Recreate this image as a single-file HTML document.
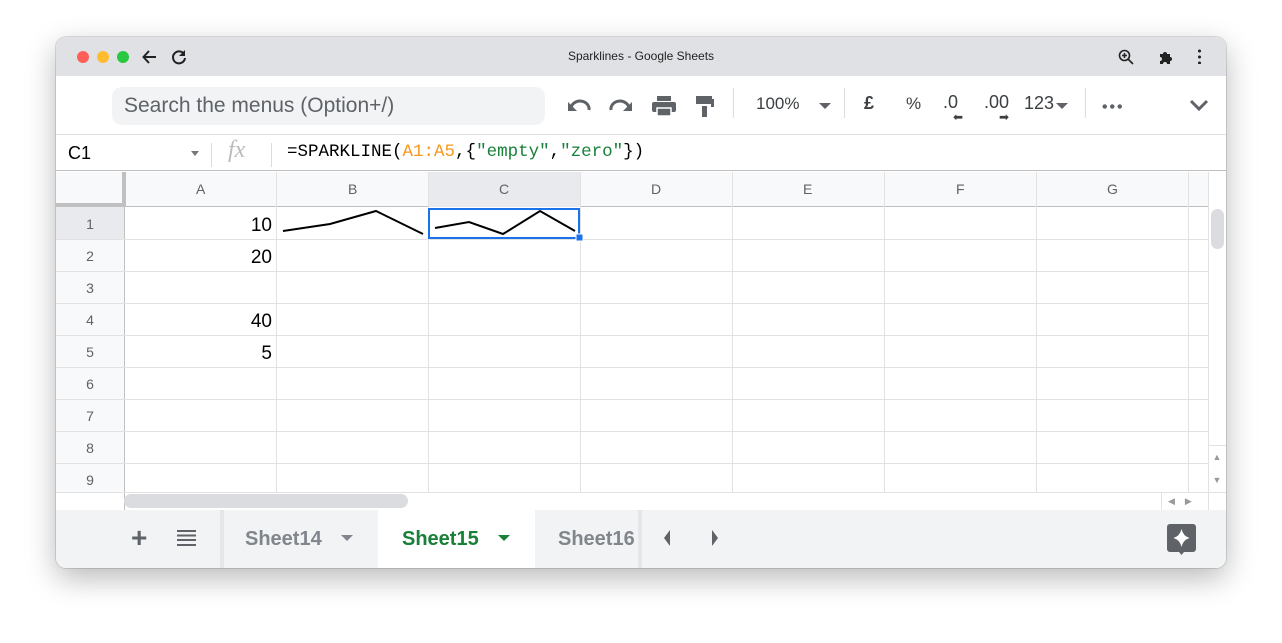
<!DOCTYPE html>
<html><head><style>
*{margin:0;padding:0;box-sizing:border-box}
body{width:1282px;height:643px;background:#fff;font-family:"Liberation Sans",Arial,sans-serif;position:relative;overflow:hidden}
.win{position:absolute;left:56px;top:37px;width:1170px;height:531px;border-radius:10px;overflow:hidden;background:#fff;box-shadow:0 10px 30px rgba(0,0,0,.28),0 0 0 1px rgba(0,0,0,.12)}
.abs{position:absolute}
.title{left:0;top:0;width:1170px;height:39px;background:#dfe1e5}
.dot{width:12px;height:12px;border-radius:50%;top:14px}
.tb{left:0;top:39px;width:1170px;height:59px;background:#fff;border-bottom:1px solid #e0e0e0}
.search{left:56px;top:11px;width:433px;height:38px;border-radius:10px;background:#f1f3f4;color:#5f6368;font-size:21px;line-height:38px;padding-left:12px}
.fb{left:0;top:98px;width:1170px;height:36px;border-bottom:1px solid #c0c0c0}
.mono{font-family:"Liberation Mono",monospace}
.hdr{background:#f8f9fa;color:#5f6368;font-size:14px;text-align:center}
.vl{position:absolute;width:1px;background:#e2e2e2}
.hl{position:absolute;height:1px;background:#e2e2e2}
.num{position:absolute;font-size:19px;color:#000;text-align:right;width:140px}
.tabs{left:0;top:473px;width:1170px;height:58px;background:#f1f3f4}
.tab{position:absolute;top:18px;font-size:20px;font-weight:bold;color:#80868b}
</style></head><body>
<div class="win">
 <div class="abs title">
  <div class="abs dot" style="left:21px;background:#fe5f57"></div>
  <div class="abs dot" style="left:41px;background:#febc2e"></div>
  <div class="abs dot" style="left:61px;background:#28c840"></div>
  <svg class="abs" style="left:85px;top:11px" width="18" height="18" viewBox="0 0 18 18"><path d="M15 9H3M8 3L2.5 9 8 15" stroke="#222" stroke-width="2" fill="none"/></svg>
  <svg class="abs" style="left:114px;top:11px" width="18" height="18" viewBox="0 0 18 18"><path d="M14 6A6 6 0 1 0 15 10" stroke="#222" stroke-width="2" fill="none"/><path d="M15 2v6h-6z" fill="#222"/></svg>
  <div class="abs" style="left:0;width:1170px;top:12px;text-align:center;font-size:12px;color:#222">Sparklines - Google Sheets</div>
  <svg class="abs" style="left:1062px;top:12px" width="16" height="16" viewBox="0 0 16 16"><circle cx="6.5" cy="6.5" r="5" stroke="#222" stroke-width="1.6" fill="none"/><path d="M10 10l5 5M6.5 4v5M4 6.5h5" stroke="#222" stroke-width="1.6"/></svg>
  <svg class="abs" style="left:1102px;top:12px" width="16" height="16" viewBox="0 0 16 16"><path d="M2 5h3a2 2 0 1 1 4 0h3v3a2 2 0 1 1 0 4v3H9a2 2 0 1 0-4 0H2v-3a2 2 0 1 0 0-4z" fill="#222"/></svg>
  <div class="abs" style="left:1142px;top:11px;width:3px;height:16px;background:radial-gradient(circle,#222 1.4px,transparent 1.6px) 0 0/3px 6px"></div>
 </div>
 <div class="abs tb">
  <div class="abs search">Search the menus (Option+/)</div>
  <svg class="abs" style="left:510px;top:18px" width="150" height="24" viewBox="0 0 150 24">
   <path d="M5 14a8 7 0 0 1 18 2" stroke="#5f6368" stroke-width="3" fill="none"/><path d="M2 8v9h9z" fill="#5f6368"/>
   <path d="M63 14a8 7 0 0 0-18 2" stroke="#5f6368" stroke-width="3" fill="none"/><path d="M66 8v9h-9z" fill="#5f6368"/>
   <rect x="86" y="8" width="24" height="10" rx="2" fill="#5f6368"/><rect x="91" y="2" width="14" height="5" fill="#5f6368"/><rect x="91" y="14" width="14" height="8" fill="#5f6368" stroke="#fff" stroke-width="1.5"/>
   <rect x="130" y="2" width="16" height="8" fill="#5f6368"/><rect x="145" y="5" width="3" height="8" fill="#5f6368"/><rect x="136" y="12" width="5" height="11" fill="#5f6368"/>
  </svg>
  <div class="abs" style="left:677px;top:12px;width:1px;height:30px;background:#dadce0"></div>
  <div class="abs" style="left:700px;top:18px;font-size:17px;color:#3c4043">100%</div>
  <div class="abs" style="left:763px;top:27px;border:6px solid transparent;border-top:6px solid #5f6368;border-bottom:0"></div>
  <div class="abs" style="left:788px;top:12px;width:1px;height:30px;background:#dadce0"></div>
  <div class="abs" style="left:808px;top:17px;font-size:18px;font-weight:bold;color:#3c4043">£</div>
  <div class="abs" style="left:850px;top:18px;font-size:17px;color:#3c4043">%</div>
  <div class="abs" style="left:887px;top:16px;font-size:18px;color:#3c4043">.0</div>
  <div class="abs" style="left:897px;top:34px;font-size:12px;color:#3c4043">⬅</div>
  <div class="abs" style="left:928px;top:16px;font-size:18px;color:#3c4043">.00</div>
  <div class="abs" style="left:943px;top:34px;font-size:12px;color:#3c4043">➡</div>
  <div class="abs" style="left:968px;top:17px;font-size:18px;color:#3c4043">123</div>
  <div class="abs" style="left:1000px;top:27px;border:6px solid transparent;border-top:6px solid #5f6368;border-bottom:0"></div>
  <div class="abs" style="left:1029px;top:12px;width:1px;height:30px;background:#dadce0"></div>
  <div class="abs" style="left:1045px;top:28px;width:22px;height:5px;background:radial-gradient(circle,#5f6368 2px,transparent 2.4px) 0 0/7.5px 5px"></div>
  <svg class="abs" style="left:1133px;top:22px" width="20" height="14" viewBox="0 0 20 14"><path d="M2 3l8 8 8-8" stroke="#5f6368" stroke-width="3" fill="none"/></svg>
 </div>
 <div class="abs fb">
  <div class="abs" style="left:12px;top:8px;font-size:18px;color:#000">C1</div>
  <div class="abs" style="left:135px;top:16px;border:4px solid transparent;border-top:5px solid #777;border-bottom:0"></div>
  <div class="abs" style="left:155px;top:8px;width:1px;height:24px;background:#dadce0"></div>
  <div class="abs" style="left:172px;top:2px;font-size:24px;font-style:italic;color:#bbb;font-family:'Liberation Serif',serif">fx</div>
  <div class="abs" style="left:215px;top:8px;width:1px;height:24px;background:#dadce0"></div>
  <div class="abs mono" style="left:231px;top:7px;font-size:17.5px;color:#000">=SPARKLINE(<span style="color:#f7981d">A1:A5</span>,{<span style="color:#188038">"empty"</span>,<span style="color:#188038">"zero"</span>})</div>
 </div>
 <!-- grid -->
 <div class="abs hdr" style="left:0;top:135px;width:1152px;height:35px;border-bottom:1px solid #c0c0c0"></div>
 <div class="abs hdr" style="left:0;top:170px;width:68px;height:286px"></div>
 <div class="abs" style="left:66px;top:135px;width:4px;height:35px;background:#c0c0c0"></div>
 <div class="abs" style="left:0;top:166px;width:70px;height:4px;background:#c0c0c0"></div>
 <div class="abs" style="left:372px;top:135px;width:152px;height:35px;background:#e8eaed"></div>
 <div class="abs" style="left:0;top:170px;width:68px;height:32px;background:#e8eaed"></div>
 <div class="vl" style="left:68px;top:135px;height:338px;background:#c0c0c0"></div>
 <div class="vl" style="left:220px;top:135px;height:320px"></div>
 <div class="vl" style="left:372px;top:135px;height:320px"></div>
 <div class="vl" style="left:524px;top:135px;height:320px"></div>
 <div class="vl" style="left:676px;top:135px;height:320px"></div>
 <div class="vl" style="left:828px;top:135px;height:320px"></div>
 <div class="vl" style="left:980px;top:135px;height:320px"></div>
 <div class="vl" style="left:1132px;top:135px;height:320px"></div>
 <div class="hl" style="left:0;top:202px;width:1152px"></div>
 <div class="hl" style="left:0;top:234px;width:1152px"></div>
 <div class="hl" style="left:0;top:266px;width:1152px"></div>
 <div class="hl" style="left:0;top:298px;width:1152px"></div>
 <div class="hl" style="left:0;top:330px;width:1152px"></div>
 <div class="hl" style="left:0;top:362px;width:1152px"></div>
 <div class="hl" style="left:0;top:394px;width:1152px"></div>
 <div class="hl" style="left:0;top:426px;width:1152px"></div>
 <div class="hl" style="left:0;top:455px;width:1170px"></div>
 <div class="abs" style="left:0;top:144px;width:1152px;font-size:14px;color:#5f6368">
  <span class="abs" style="left:140px">A</span><span class="abs" style="left:292px">B</span><span class="abs" style="left:443px">C</span><span class="abs" style="left:595px">D</span><span class="abs" style="left:747px">E</span><span class="abs" style="left:900px">F</span><span class="abs" style="left:1051px">G</span>
 </div>
 <div class="abs" style="left:0;top:171px;width:68px;font-size:14px;color:#5f6368;text-align:center;line-height:32px">1<br>2<br>3<br>4<br>5<br>6<br>7<br>8<br>9</div>
 <div class="num" style="left:76px;top:178px">10</div>
 <div class="num" style="left:76px;top:210px">20</div>
 <div class="num" style="left:76px;top:274px">40</div>
 <div class="num" style="left:76px;top:306px">5</div>
 <svg class="abs" style="left:0;top:0" width="1170" height="531">
  <polyline points="227,194 274,187 320,174 367,197" stroke="#000" stroke-width="2" fill="none"/>
  <polyline points="379,191 413,185 447,197 484,174 519,194" stroke="#000" stroke-width="2" fill="none"/>
  <rect x="373" y="172" width="150" height="29" fill="none" stroke="#1a73e8" stroke-width="2"/>
  <rect x="520" y="197" width="7" height="7" fill="#1a73e8" stroke="#fff" stroke-width="1"/>
 </svg>
 <!-- scrollbars -->
 <div class="abs" style="left:1152px;top:135px;width:18px;height:338px;background:#fff;border-left:1px solid #e2e2e2"></div>
 <div class="abs" style="left:1155px;top:172px;width:13px;height:40px;border-radius:7px;background:#dadce0"></div>
 <div class="abs" style="left:1152px;top:408px;width:18px;height:48px;border-top:1px solid #e2e2e2;border-bottom:1px solid #e2e2e2;font-size:9px;color:#999;text-align:center;line-height:23px">▲<br>▼</div>
 <div class="abs" style="left:68px;top:457px;width:284px;height:14px;border-radius:7px;background:#dadce0"></div>
 <div class="abs" style="left:1105px;top:455px;width:48px;height:18px;border-left:1px solid #e2e2e2;font-size:9px;color:#999;line-height:18px;padding-left:6px">◀&nbsp;&nbsp;&nbsp;&nbsp;▶</div>
 <!-- tabs -->
 <div class="abs tabs">
  <div class="abs" style="left:75px;top:12px;font-size:28px;color:#5f6368;font-weight:bold">+</div>
  <div class="abs" style="left:121px;top:20px;width:19px;height:16px;background:repeating-linear-gradient(#5f6368 0 2px,transparent 2px 4.6px)"></div>
  <div class="abs" style="left:164px;top:0;width:4px;height:58px;background:#e4e6e8"></div>
  <div class="tab" style="left:189px">Sheet14</div>
  <div class="abs" style="left:285px;top:25px;border:6px solid transparent;border-top:6px solid #80868b;border-bottom:0"></div>
  <div class="abs" style="left:322px;top:0;width:157px;height:58px;background:#fff"></div>
  <div class="tab" style="left:346px;color:#188038">Sheet15</div>
  <div class="abs" style="left:442px;top:25px;border:6px solid transparent;border-top:6px solid #188038;border-bottom:0"></div>
  <div class="tab" style="left:502px;width:80px;overflow:hidden;white-space:nowrap">Sheet16</div>
  <div class="abs" style="left:582px;top:0;width:4px;height:58px;background:#e4e6e8"></div>
  <div class="abs" style="left:608px;top:20px;border:6px solid transparent;border-right:6px solid #5f6368;border-left:0;border-top-width:8px;border-bottom-width:8px"></div>
  <div class="abs" style="left:656px;top:20px;border:6px solid transparent;border-left:6px solid #5f6368;border-right:0;border-top-width:8px;border-bottom-width:8px"></div>
  <svg class="abs" style="left:1111px;top:14px" width="29" height="31" viewBox="0 0 29 31"><path d="M3 0h23a3 3 0 0 1 3 3v22a3 3 0 0 1-3 3H17l-2.5 3-2.5-3H3a3 3 0 0 1-3-3V3a3 3 0 0 1 3-3z" fill="#5f6368"/><path d="M14.5 5q1.5 7 8 9q-6.5 2-8 9q-1.5-7-8-9q6.5-2 8-9z" fill="#fff"/></svg>
 </div>
</div>
</body></html>
